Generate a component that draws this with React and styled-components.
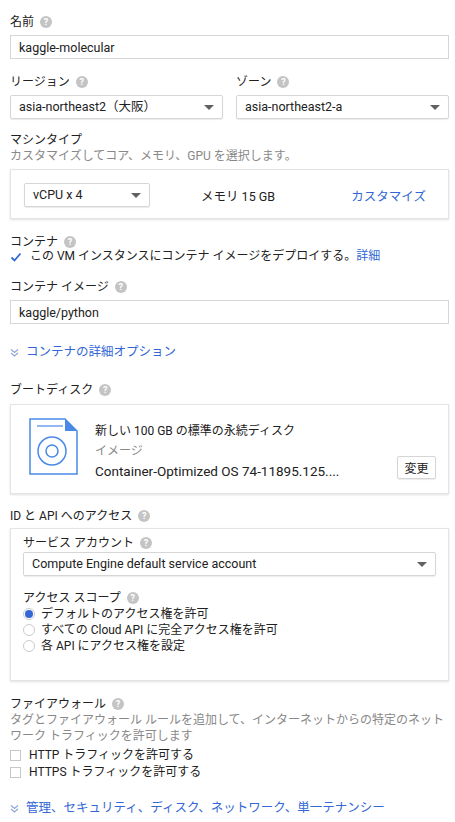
import React from "react";
import styled, { createGlobalStyle } from "styled-components";

const G = createGlobalStyle`
  body { margin: 0; background: #fff; font-family: Roboto, "Noto Sans CJK JP", sans-serif; font-size: 12px; color: #212121; }
`;
const Page = styled.div` padding: 14px 6px 0 10px; width: 439px; `;
const Label = styled.div`
  display: flex; align-items: center; gap: 6px; height: 16px; line-height: 16px;
  margin-top: ${p => p.$mt || 0}px; font-size: 12px; color: #212121;
`;
const Help = styled.span`
  width: 12px; height: 12px; border-radius: 50%; background: #c4c4c4; color: #fff;
  font-size: 9px; font-weight: bold; display: inline-flex; align-items: center; justify-content: center; line-height: 1;
`;
const Sub = styled.div` color: #888; font-size: 12px; line-height: 16px; `;
const Input = styled.div`
  box-sizing: border-box; height: 24px; margin-top: 5px; border: 1px solid #d6d6d6;
  padding: 0 8px; display: flex; align-items: center; font-size: 12.5px;
`;
const Row = styled.div` display: flex; gap: 13px; `;
const Col = styled.div` flex: 1; `;
const Select = styled.div`
  box-sizing: border-box; height: 24px; width: ${p => p.$w || "auto"}; margin-top: ${p => p.$mt ?? 5}px;
  border: 1px solid #d6d6d6; border-radius: 2px; box-shadow: 0 1px 1px rgba(0,0,0,.08);
  padding: 0 8px; display: flex; align-items: center; justify-content: space-between; font-size: 12.5px; line-height: 16px;
  &::after { content: ""; border-left: 5px solid transparent; border-right: 5px solid transparent; border-top: 5px solid #616161; }
`;
const Card = styled.div`
  box-sizing: border-box; margin-top: ${p => p.$mt || 6}px; border: 1px solid #e4e4e4;
  box-shadow: 0 1px 2px rgba(0,0,0,.12); padding: ${p => p.$pad};
  height: ${p => p.$h}px;
`;
const MachineRow = styled.div` display: flex; align-items: center; `;
const Mem = styled.span` margin-left: 51px; flex: 1; font-size: 12.5px; `;
const Link = styled.span` color: #3367d6; font-size: ${p => p.$fs || "inherit"}; `;
const CheckRow = styled.div` display: flex; align-items: center; gap: 8px; height: 17px; line-height: 17px; font-size: 12px; margin-top: ${p => p.$mt || 0}px; `;
const Box = styled.span`
  width: 11px; height: 11px; border: 1px solid #c8c8c8; box-sizing: border-box; display: inline-flex;
`;
const Expander = styled.div`
  display: flex; align-items: center; gap: 7px; color: #3367d6; margin-top: ${p => p.$mt}px; height: 16px; line-height: 16px; font-size: 12.5px;
`;
const Disk = styled.div` display: flex; gap: 17px; position: relative; `;
const DiskText = styled.div` display: flex; flex-direction: column; gap: 4px; line-height: 16px; padding-top: 5px; `;
const Big = styled.div` font-size: 13.5px; `;
const Btn = styled.div`
  position: absolute; right: 0; bottom: 0; width: 39px; height: 23px; border: 1px solid #d6d6d6; border-radius: 2px;
  box-sizing: border-box; display: flex; align-items: center; justify-content: center; font-size: 12px;
  box-shadow: 0 1px 1px rgba(0,0,0,.08);
`;
const Radio = styled.div` display: flex; align-items: center; gap: 6px; height: 16px; line-height: 16px; `;
const RadioDot = styled.span`
  width: 12px; height: 12px; border-radius: 50%; border: 1px solid #ccc; box-sizing: border-box; display: inline-flex; align-items: center; justify-content: center;
  &::after { content: ""; width: 8px; height: 8px; border-radius: 50%; background: ${p => p.$on ? "#3367d6" : "transparent"}; }
`;

const Q = () => <Help>?</Help>;
const Chev = () => (
  <svg width="9" height="9" viewBox="0 0 9 9"><path d="M1 1.5l3.5 3 3.5-3M1 5l3.5 3 3.5-3" fill="none" stroke="#8ea6d8" strokeWidth="1.2"/></svg>
);

export default function App() {
  return (
    <Page>
      <G />
      <Label>名前 <Q /></Label>
      <Input>kaggle-molecular</Input>
      <Row>
        <Col><Label $mt={15}>リージョン <Q /></Label><Select>asia-northeast2（大阪）</Select></Col>
        <Col><Label $mt={15}>ゾーン <Q /></Label><Select>asia-northeast2-a</Select></Col>
      </Row>
      <Label $mt={13}>マシンタイプ</Label>
      <Sub>カスタマイズしてコア、メモリ、GPU を選択します。</Sub>
      <Card $h={50} $pad="13px 22px 0 13px" $mt={5}>
        <MachineRow>
          <Select $w="126px" $mt={0}>vCPU x 4</Select>
          <Mem>メモリ 15 GB</Mem>
          <Link $fs="12.5px">カスタマイズ</Link>
        </MachineRow>
      </Card>
      <Label $mt={15}>コンテナ <Q /></Label>
      <CheckRow $mt={-2}>
        <svg width="12" height="12" viewBox="0 0 12 12"><path d="M1.5 6.5l3 3 6-7" fill="none" stroke="#3367d6" strokeWidth="1.8"/></svg>
        <span>この VM インスタンスにコンテナ イメージをデプロイする。<Link>詳細</Link></span>
      </CheckRow>
      <Label $mt={14}>コンテナ イメージ <Q /></Label>
      <Input>kaggle/python</Input>
      <Expander $mt={20}><Chev />コンテナの詳細オプション</Expander>
      <Label $mt={22}>ブートディスク <Q /></Label>
      <Card $h={90} $pad="13px 12px 12px 18px">
        <Disk>
          <svg width="49" height="57" viewBox="0 0 49 57">
            <path d="M1 1h35l12 12v43H1z" fill="none" stroke="#4a89e8" strokeWidth="1.5"/>
            <path d="M36 1v12h12z" fill="#4a89e8"/>
            <path d="M8 8h26" stroke="#4a89e8" strokeWidth="1.2"/>
            <circle cx="23" cy="33" r="14" fill="none" stroke="#4a89e8" strokeWidth="1.5"/>
            <circle cx="23" cy="33" r="6" fill="none" stroke="#4a89e8" strokeWidth="1.5"/>
          </svg>
          <DiskText>
            <div>新しい 100 GB の標準の永続ディスク</div>
            <Sub>イメージ</Sub>
            <Big>Container-Optimized OS 74-11895.125....</Big>
          </DiskText>
          <Btn>変更</Btn>
        </Disk>
      </Card>
      <Label $mt={14}>ID と API へのアクセス <Q /></Label>
      <Card $h={153} $pad="6px 12px 0 12px" $mt={4}>
        <Label>サービス アカウント <Q /></Label>
        <Select $mt={1}>Compute Engine default service account</Select>
        <Label $mt={14}>アクセス スコープ <Q /></Label>
        <Radio><RadioDot $on />デフォルトのアクセス権を許可</Radio>
        <Radio><RadioDot />すべての Cloud API に完全アクセス権を許可</Radio>
        <Radio><RadioDot />各 API にアクセス権を設定</Radio>
      </Card>
      <Label $mt={15}>ファイアウォール <Q /></Label>
      <Sub>タグとファイアウォール ルールを追加して、インターネットからの特定のネットワーク トラフィックを許可します</Sub>
      <CheckRow $mt={3}><Box />HTTP トラフィックを許可する</CheckRow>
      <CheckRow><Box />HTTPS トラフィックを許可する</CheckRow>
      <Expander $mt={19}><Chev />管理、セキュリティ、ディスク、ネットワーク、単一テナンシー</Expander>
      <Sub style={{ marginTop: 9 }}>次のオプションがカスタマイズされました:</Sub>
    </Page>
  );
}
